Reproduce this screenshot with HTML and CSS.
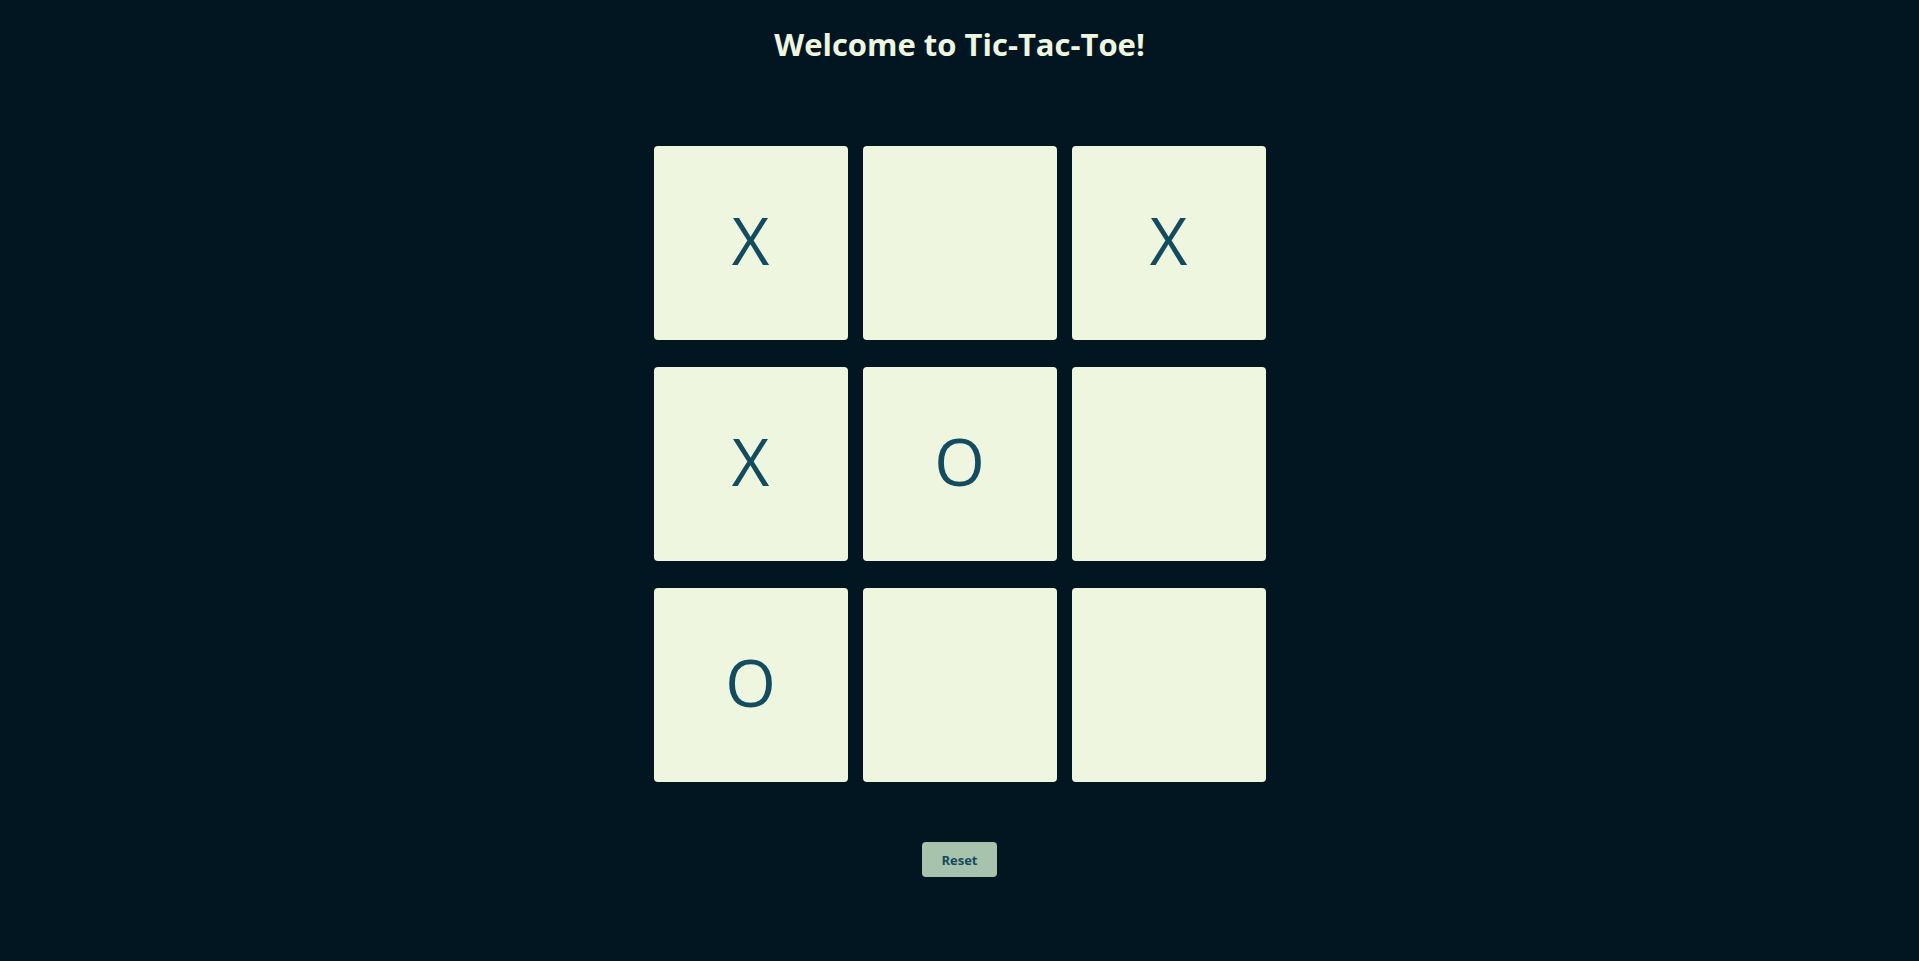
FILE: index.html
```html
<!DOCTYPE html>
<html lang="en">
<head>
<meta charset="utf-8">
<title>Tic-Tac-Toe</title>
<link rel="stylesheet" href="styles.css">
</head>
<body>
<main class="app">
  <h1 class="title">Welcome to Tic-Tac-Toe!</h1>
  <div class="board">
    <div class="cell">X</div>
    <div class="cell"></div>
    <div class="cell">X</div>
    <div class="cell">X</div>
    <div class="cell">O</div>
    <div class="cell"></div>
    <div class="cell">O</div>
    <div class="cell"></div>
    <div class="cell"></div>
  </div>
  <button class="reset" type="button">Reset</button>
</main>
</body>
</html>
```

FILE: styles.css
```css
html, body {
  margin: 0;
  padding: 0;
  height: 100%;
}

body {
  background: #011620;
  font-family: "Open Sans", "Noto Sans", "DejaVu Sans", sans-serif;
  color: #eef6e0;
}

.app {
  display: flex;
  flex-direction: column;
  align-items: center;
  padding-top: 24px;
}

.title {
  margin: 0;
  font-size: 31px;
  font-weight: 700;
  line-height: 41px;
  color: #eef6e0;
}

.board {
  margin-top: 81px;
  display: grid;
  grid-template-columns: repeat(3, 194px);
  grid-auto-rows: 194px;
  column-gap: 15px;
  row-gap: 27px;
}

.cell {
  background: #eef6e0;
  border-radius: 4px;
  display: flex;
  align-items: center;
  justify-content: center;
  padding-bottom: 5px;
  box-sizing: border-box;
  font-size: 65px;
  font-weight: 400;
  color: #134b5f;
  line-height: 1;
}

.reset {
  margin-top: 60px;
  width: 75px;
  height: 35px;
  border: none;
  border-radius: 4px;
  background: #a8c3ad;
  color: #134b5f;
  font-family: "Open Sans", "Noto Sans", sans-serif;
  font-size: 13px;
  font-weight: 700;
  padding: 0;
}
```
